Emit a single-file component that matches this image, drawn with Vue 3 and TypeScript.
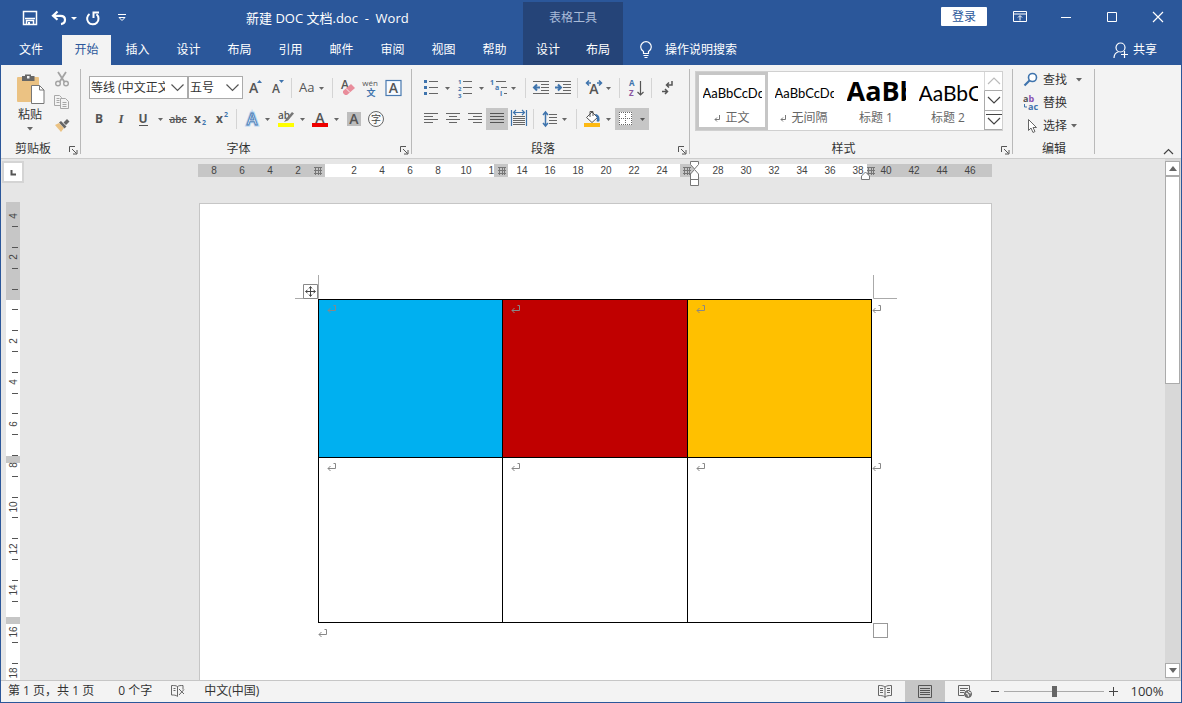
<script setup lang="ts">
import { ref } from 'vue'

const tabs: string[] = ['文件', '开始', '插入', '设计', '布局', '引用', '邮件', '审阅', '视图', '帮助']
const tableTabs: string[] = ['设计', '布局']
const activeTab = ref('开始')
const zoom = ref(50)

interface StylePreview {
  name: string
  sample: string
  kind: string
  mark: boolean
}
const styles: StylePreview[] = [
  { name: '正文', sample: 'AaBbCcDd', kind: 'body', mark: true },
  { name: '无间隔', sample: 'AaBbCcDd', kind: 'body', mark: true },
  { name: '标题 1', sample: 'AaBb', kind: 'h1', mark: false },
  { name: '标题 2', sample: 'AaBbC', kind: 'h2', mark: false },
]

const rulerNumbers: string[] = []
for (let n = -8; n <= 46; n += 2) {
  rulerNumbers.push(n === 0 || n === 26 ? '' : String(Math.abs(n)))
}

const rulerOrigin = 97
const rulerStep = 41.6
const verticalNumbers = [-4, -2, 2, 4, 6, 8, 10, 12, 14, 16, 18].map((n) => ({
  label: Math.abs(n),
  y: Math.round(rulerOrigin + (n / 2) * rulerStep),
}))
const verticalTicks: number[] = []
for (let k = -4; k < 18; k++) {
  const y = Math.round(rulerOrigin + 10.4 + k * 20.8)
  if (k !== 15) verticalTicks.push(y)
}

const cells = [
  ['blue', 'red', 'gold'],
  ['plain', 'plain', 'plain'],
]
</script>

<template>
  <div class="window">
    <header class="head">
      <div class="title-row">
        <div class="title-left">
          <div class="quick">
            <button class="qbtn save" aria-label="保存">
              <svg width="16" height="16" viewBox="0 0 16 16"><path d="M1.500 1.500h13v13h-13zM3 8.500h10M4.500 14v-3.500h7V14" fill="none" stroke="#fff" stroke-width="1.500" /><path d="M6 12h2v2H6z" fill="#fff" /></svg>
            </button>
            <button class="qbtn undo" aria-label="撤消">
              <svg width="26" height="16" viewBox="0 0 26 16"><path d="M6.500 1.500L2 5.800l4.500 4M2.500 5.800h7c3 0 4.500 1.700 4.500 4s-1.500 4-4 4.300" fill="none" stroke="#fff" stroke-width="2.200" /><path d="M20 7h6l-3 3z" fill="#fff" /></svg>
            </button>
            <button class="qbtn redo" aria-label="恢复">
              <svg width="16" height="16" viewBox="0 0 16 16"><path d="M4.500 4A5.700 5.700 0 1 0 11.500 4.300" fill="none" stroke="#fff" stroke-width="2" /><path d="M8.500 8V2.500H14" fill="none" stroke="#fff" stroke-width="2" /></svg>
            </button>
            <button class="qbtn more" aria-label="自定义快速访问工具栏">
              <svg width="10" height="8" viewBox="0 0 10 8"><path d="M1 .5h8M2 3.500h6l-3 3z" fill="none" stroke="#fff" /></svg>
            </button>
          </div>
          <h1 class="doc-title">新建 DOC 文档.doc&nbsp; - &nbsp;Word</h1>
        </div>
        <div class="context-title">表格工具</div>
        <div class="grow"></div>
        <button class="login">登录</button>
        <button class="wbtn" aria-label="功能区显示选项">
          <svg width="14" height="12" viewBox="0 0 14 12"><path d="M.5.500h13v10H.500zM.500 3h13M7 9.500V5M5 6.500l2-2 2 2" fill="none" stroke="#fff" /></svg>
        </button>
        <button class="wbtn" aria-label="最小化">
          <svg width="12" height="12" viewBox="0 0 12 12"><path d="M1 6.500h10" stroke="#fff" /></svg>
        </button>
        <button class="wbtn" aria-label="最大化">
          <svg width="12" height="12" viewBox="0 0 12 12"><path d="M1.500 1.500h9v9h-9z" fill="none" stroke="#fff" /></svg>
        </button>
        <button class="wbtn" aria-label="关闭">
          <svg width="12" height="12" viewBox="0 0 12 12"><path d="M1 1l10 10M11 1L1 11" stroke="#fff" stroke-width="1.200" /></svg>
        </button>
      </div>
      <nav class="tab-row">
        <button v-for="t in tabs" :key="t" class="tab" :class="{ file: t === '文件', active: t === activeTab }" @click="activeTab = t">{{ t }}</button>
        <div class="context-tabs">
          <button v-for="t in tableTabs" :key="t" class="tab">{{ t }}</button>
        </div>
        <label class="tell">
          <svg width="14" height="18" viewBox="0 0 14 18"><path d="M4.500 12.500v-2C2.800 9.400 1.700 7.900 1.700 6a5.300 5.300 0 0 1 10.600 0c0 1.900-1.100 3.400-2.800 4.500v2zM4.500 14.500h5M5.500 16.500h3" fill="none" stroke="#fff" stroke-width="1.200" /></svg>
          <input type="text" placeholder="操作说明搜索" aria-label="操作说明搜索" />
        </label>
        <div class="grow"></div>
        <button class="share">
          <svg width="16" height="17" viewBox="0 0 16 17"><circle cx="7.500" cy="5.500" r="4.500" fill="none" stroke="#fff" stroke-width="1.200" /><path d="M1 16c0-3.500 2-5.500 4.500-6.300M8 12.500h7M11.500 9v7" fill="none" stroke="#fff" stroke-width="1.200" /></svg>
          <span>共享</span>
        </button>
      </nav>
    </header>

    <section class="ribbon">
      <div class="group clipboard">
        <div class="clip-body">
          <button class="paste">
            <svg width="30" height="34" viewBox="0 0 30 34"><rect x="2" y="4" width="22" height="25" rx="1" fill="#ebc283" /><path d="M7 3h3V1.500h6V3h3.500v5H7z" fill="#666" /><path d="M12 3h2.500v2.500H12z" fill="#f3f3f3" /><path d="M16.500 12.500h8l4.500 4.500v13.500H16.500z" fill="#fff" stroke="#777" /><path d="M24.500 12.500V17H29" fill="none" stroke="#777" /></svg>
            <span>粘贴</span>
            <svg width="6" height="4" viewBox="0 0 6 4"><path d="M0 0h6L3 3.500z" fill="#666" /></svg>
          </button>
          <div class="clip-tools">
            <button aria-label="剪切">
              <svg width="16" height="16" viewBox="0 0 16 16"><path d="M4 1l6.500 10M12 1L5.500 11" stroke="#a3a3a3" stroke-width="1.800" fill="none" /><circle cx="4" cy="12.500" r="2.300" fill="none" stroke="#a3a3a3" stroke-width="1.400" /><circle cx="12" cy="12.500" r="2.300" fill="none" stroke="#a3a3a3" stroke-width="1.400" /></svg>
            </button>
            <button aria-label="复制">
              <svg width="16" height="16" viewBox="0 0 16 16"><path d="M6.500 11.500h-6v-10h5l2 2v1M2.500 4.500h3M2.500 6.500h3M2.500 8.500h3" fill="none" stroke="#a8a8a8" /><path d="M6.500 4.500h5l3 3v7h-8zM8.500 8.500h4M8.500 10.500h4M8.500 12.500h4" fill="none" stroke="#a8a8a8" /></svg>
            </button>
            <button aria-label="格式刷">
              <svg width="16" height="16" viewBox="0 0 16 16"><path d="M1 8l4-2 5 5-3 4z" fill="#ebc283" /><path d="M5 5.500l2-1.500 5.500 5.500-2 2zM9.500 5.500L13 2l2.500 2.500L12 8z" fill="#666" /></svg>
            </button>
          </div>
        </div>
        <div class="foot"><span>剪贴板</span><button class="launch" aria-label="剪贴板选项"><svg width="9" height="9" viewBox="0 0 9 9"><path d="M.5 6V.5H6M3 3l4.500 4.500M8 4v4H4" fill="none" stroke="#555" /></svg></button></div>
      </div>

      <div class="group font">
        <div class="rows">
          <div class="row">
            <span class="combo family">
              <select aria-label="字体"><option>等线 (中文正文)</option><option>宋体</option></select>
              <svg width="13" height="8" viewBox="0 0 13 8"><path d="M.5.500l6 6 6-6" fill="none" stroke="#555" stroke-width="1.200" /></svg>
            </span>
            <span class="combo size">
              <select aria-label="字号"><option>五号</option><option>小四</option></select>
              <svg width="13" height="8" viewBox="0 0 13 8"><path d="M.5.500l6 6 6-6" fill="none" stroke="#555" stroke-width="1.200" /></svg>
            </span>
            <button aria-label="增大字号"><svg width="22" height="22" viewBox="0 0 22 22"><text x="5" y="16" class="g" font-size="14">A</text><path d="M13 6l2.500-3L18 6z" fill="#3f74ad" /></svg></button>
            <button aria-label="减小字号"><svg width="22" height="22" viewBox="0 0 22 22"><text x="6" y="16" class="g" font-size="12">A</text><path d="M13 3h5l-2.500 3z" fill="#3f74ad" /></svg></button>
            <i class="sep"></i>
            <button aria-label="更改大小写"><svg width="34" height="22" viewBox="0 0 34 22"><text x="4" y="15" class="t" font-size="13">Aa</text><path d="M24 10h5l-2.500 3z" fill="#666" /></svg></button>
            <i class="sep"></i>
            <button aria-label="清除所有格式"><svg width="23" height="22" viewBox="0 0 23 22"><text x="5" y="12" class="g" font-size="12">A</text><path d="M7 14l8-7 4 4-8 7H9l-2-2z" fill="#e98d9b" /><path d="M10 11.500l4 4" stroke="#f3f3f3" /></svg></button>
            <button aria-label="拼音指南"><svg width="23" height="22" viewBox="0 0 23 22"><text x="11" y="9" class="t" font-size="8" text-anchor="middle">wén</text><text x="12" y="19" font-size="9" font-weight="700" fill="#3f74ad" text-anchor="middle">文</text></svg></button>
            <button aria-label="字符边框"><svg width="23" height="22" viewBox="0 0 23 22"><rect x="4" y="3.500" width="15" height="15" fill="#f8fbff" stroke="#4a7ab0" stroke-width="1.200" /><text x="11.500" y="16" class="g" font-size="14" text-anchor="middle">A</text></svg></button>
          </div>
          <div class="row">
            <button aria-label="加粗"><svg width="21" height="22" viewBox="0 0 21 22"><text x="10" y="15" class="b" text-anchor="middle">B</text></svg></button>
            <button aria-label="倾斜"><svg width="22" height="22" viewBox="0 0 22 22"><text x="11" y="15" class="i" text-anchor="middle">I</text></svg></button>
            <button aria-label="下划线"><svg width="34" height="22" viewBox="0 0 34 22"><text x="11" y="15" class="b" text-anchor="middle">U</text><path d="M7 17.500h9" stroke="#555" /><path d="M26 10h5l-2.500 3z" fill="#666" /></svg></button>
            <button aria-label="删除线"><svg width="24" height="22" viewBox="0 0 24 22"><text x="12" y="15" class="g" font-size="10" text-anchor="middle">abc</text><path d="M3 11.500h18" stroke="#555" /></svg></button>
            <button aria-label="下标"><svg width="21" height="22" viewBox="0 0 21 22"><text x="4" y="15" class="b">x</text><text x="12" y="17" font-size="7" font-weight="700" fill="#3f74ad">2</text></svg></button>
            <button aria-label="上标"><svg width="22" height="22" viewBox="0 0 22 22"><text x="5" y="15" class="b">x</text><text x="13" y="9" font-size="7" font-weight="700" fill="#3f74ad">2</text></svg></button>
            <i class="sep"></i>
            <button aria-label="文本效果"><svg width="34" height="22" viewBox="0 0 34 22"><text x="12" y="17" font-size="16" font-weight="600" fill="#f3f8fd" stroke="#b9d5f0" stroke-width="3" text-anchor="middle">A</text><text x="12" y="17" font-size="16" font-weight="600" fill="#fff" stroke="#4c7fb8" text-anchor="middle">A</text><path d="M25 10h5l-2.500 3z" fill="#666" /></svg></button>
            <button aria-label="突出显示"><svg width="34" height="22" viewBox="0 0 34 22"><text x="4" y="11" class="g" font-size="10">ab</text><path d="M10 14l2-3 6-7 2 1.500-6 7z" fill="#777" /><path d="M4 15h16v4H4z" fill="#ff0" /><path d="M26 10h5l-2.500 3z" fill="#666" /></svg></button>
            <button aria-label="字体颜色"><svg width="34" height="22" viewBox="0 0 34 22"><text x="12" y="15" class="g" font-size="14" text-anchor="middle">A</text><path d="M4 15h16v4H4z" fill="#e00" /><path d="M26 10h5l-2.500 3z" fill="#666" /></svg></button>
            <button aria-label="字符底纹"><svg width="22" height="22" viewBox="0 0 22 22"><path d="M5 4h14v14H5z" fill="#bdbdbd" /><text x="12" y="16" class="g" font-size="14" text-anchor="middle">A</text></svg></button>
            <button aria-label="带圈字符"><svg width="22" height="22" viewBox="0 0 22 22"><circle cx="12" cy="11" r="7.500" fill="#fafafa" stroke="#666" /><text x="12" y="15" font-size="10" fill="#444" text-anchor="middle">字</text></svg></button>
          </div>
        </div>
        <div class="foot"><span>字体</span><button class="launch" aria-label="字体选项"><svg width="9" height="9" viewBox="0 0 9 9"><path d="M.5 6V.5H6M3 3l4.500 4.500M8 4v4H4" fill="none" stroke="#555" /></svg></button></div>
      </div>

      <div class="group para">
        <div class="rows">
          <div class="row">
            <button aria-label="项目符号"><svg width="34" height="22" viewBox="0 0 34 22"><path d="M4 3h3v3H4zM4 9h3v3H4zM4 15h3v3H4z" fill="#3f74ad" /><path d="M9 4.500h9M9 10.500h9M9 16.500h9" stroke="#666" /><path d="M25 10h5l-2.500 3z" fill="#666" /></svg></button>
            <button aria-label="编号"><svg width="34" height="22" viewBox="0 0 34 22"><g font-size="6" font-weight="700" fill="#3f74ad"><text x="4" y="7">1</text><text x="4" y="14">2</text><text x="4" y="21">3</text></g><path d="M9 4.500h9M9 10.500h9M9 16.500h9" stroke="#666" /><path d="M25 10h5l-2.500 3z" fill="#666" /></svg></button>
            <button aria-label="多级列表"><svg width="34" height="22" viewBox="0 0 34 22"><g font-size="7" font-weight="700" fill="#3f74ad"><text x="2" y="8">1</text><text x="7" y="13">a</text><text x="12" y="19">i</text></g><path d="M8 4.500h10M13 10.500h6M16 16.500h3" stroke="#666" /><path d="M23 10h5l-2.500 3z" fill="#666" /></svg></button>
            <i class="sep"></i>
            <button aria-label="减少缩进量"><svg width="23" height="22" viewBox="0 0 23 22"><path d="M4 4.500h16M12 7.500h8M12 10.500h8M12 13.500h8M4 16.500h16" stroke="#666" /><path d="M11 10.500H6M8 7.500l-3 3 3 3" fill="none" stroke="#3f74ad" stroke-width="2" /></svg></button>
            <button aria-label="增加缩进量"><svg width="22" height="22" viewBox="0 0 22 22"><path d="M3 4.500h16M11 7.500h8M11 10.500h8M11 13.500h8M3 16.500h16" stroke="#666" /><path d="M3 10.500h5M6 7.500l3 3-3 3" fill="none" stroke="#3f74ad" stroke-width="2" /></svg></button>
            <i class="sep"></i>
            <button aria-label="中文版式"><svg width="35" height="22" viewBox="0 0 35 22"><text x="13" y="17" class="g" font-size="14" text-anchor="middle">A</text><path d="M10 6H6M8 3.500L5.500 6 8 8.500M16 6h4M18 3.500L20.500 6 18 8.500" fill="none" stroke="#3f74ad" stroke-width="1.500" /><path d="M25 10h5l-2.500 3z" fill="#666" /></svg></button>
            <i class="sep"></i>
            <button aria-label="排序"><svg width="25" height="22" viewBox="0 0 25 22"><text x="6" y="9" font-size="8" font-weight="700" fill="#3f74ad">A</text><text x="6" y="19" font-size="8" font-weight="700" fill="#8a55a0">Z</text><path d="M17.500 4v14M14.500 15l3 3 3-3" fill="none" stroke="#555" stroke-width="1.200" /></svg></button>
            <i class="sep"></i>
            <button aria-label="显示编辑标记"><svg width="24" height="22" viewBox="0 0 24 22"><path d="M17 4v4h-5M14 5.500L11.500 8l2.500 2.500M7 14.500h5M10 12l2.500 2.500L10 17" fill="none" stroke="#555" stroke-width="1.500" /></svg></button>
          </div>
          <div class="row">
            <button aria-label="左对齐"><svg width="22" height="22" viewBox="0 0 22 22"><path d="M4 5.500h14M4 8.500h9M4 11.500h14M4 14.500h9" stroke="#666" /></svg></button>
            <button aria-label="居中"><svg width="22" height="22" viewBox="0 0 22 22"><path d="M4 5.500h14M7 8.500h8M4 11.500h14M7 14.500h8" stroke="#666" /></svg></button>
            <button aria-label="右对齐"><svg width="22" height="22" viewBox="0 0 22 22"><path d="M4 5.500h14M9 8.500h9M4 11.500h14M9 14.500h9" stroke="#666" /></svg></button>
            <button class="on" aria-label="两端对齐"><svg width="22" height="22" viewBox="0 0 22 22"><path d="M4 5.500h14M4 8.500h14M4 11.500h14M4 14.500h14" stroke="#555" /></svg></button>
            <button aria-label="分散对齐"><svg width="22" height="22" viewBox="0 0 22 22"><path d="M3.500 2v16M18.500 2v16M6 4.500h10M8 2L5.500 4.500 8 7M14 2l2.500 2.500L14 7" fill="none" stroke="#3f74ad" stroke-width="1.200" /><path d="M5 8.500h12M5 10.500h12M5 12.500h12M5 14.500h12M5 16.500h12" stroke="#666" /></svg></button>
            <i class="sep"></i>
            <button aria-label="行距"><svg width="36" height="22" viewBox="0 0 36 22"><path d="M8.500 4v14M6 7l2.500-3L11 7M6 15l2.500 3 2.500-3" fill="none" stroke="#3f74ad" stroke-width="1.500" /><path d="M12 6.500h8M12 9.500h8M12 12.500h8M12 15.500h8" stroke="#666" /><path d="M25 10h5l-2.500 3z" fill="#666" /></svg></button>
            <i class="sep"></i>
            <button aria-label="底纹"><svg width="35" height="22" viewBox="0 0 35 22"><path d="M6.500 9.500L12 4l5.500 5.500L12 14.500z" fill="#fff" stroke="#555" /><path d="M10 9V3.500h3V8" fill="none" stroke="#555" /><path d="M15 6c3 0 5 2 4.500 7-1 1-2 1-3 0 1-2 .5-4-1.500-7z" fill="#3f74ad" /><path d="M4 15h16v4H4z" fill="#fdb913" /><path d="M26 10h5l-2.500 3z" fill="#666" /></svg></button>
            <button class="on" aria-label="边框"><svg width="34" height="22" viewBox="0 0 34 22"><path d="M4 4h13v13H4z" fill="#fff" /><path d="M4.500 4v13M10.500 4v13M16.500 4v13M4 4.500h13M4 10.500h13M4 16.500h13" stroke="#666" stroke-dasharray="1 1" /><path d="M25 10h5l-2.500 3z" fill="#555" /></svg></button>
          </div>
        </div>
        <div class="foot"><span>段落</span><button class="launch" aria-label="段落选项"><svg width="9" height="9" viewBox="0 0 9 9"><path d="M.5 6V.5H6M3 3l4.500 4.500M8 4v4H4" fill="none" stroke="#555" /></svg></button></div>
      </div>

      <div class="group styles">
        <div class="gallery">
          <button v-for="(s, n) in styles" :key="s.name" class="style" :class="{ picked: n === 0 }">
            <span class="sample" :class="s.kind">{{ s.sample }}</span>
            <span class="caption">
              <svg v-if="s.mark" width="7" height="7" viewBox="0 0 7 7"><path d="M5.500 0v4.500H1M3 2.500l-2 2 2 2" fill="none" stroke="#777" /></svg>
              {{ s.name }}
            </span>
          </button>
          <div class="pager">
            <button class="dim" aria-label="上一行"><svg width="14" height="8" viewBox="0 0 14 8"><path d="M1 7l6-6 6 6" fill="none" stroke="#bbb" stroke-width="1.200" /></svg></button>
            <button aria-label="下一行"><svg width="14" height="8" viewBox="0 0 14 8"><path d="M1 1l6 6 6-6" fill="none" stroke="#444" stroke-width="1.200" /></svg></button>
            <button aria-label="其他"><svg width="16" height="13" viewBox="0 0 16 13"><path d="M0 1.500h16M2 5l6 6 6-6" fill="none" stroke="#444" stroke-width="1.200" /></svg></button>
          </div>
        </div>
        <div class="foot"><span>样式</span><button class="launch" aria-label="样式选项"><svg width="9" height="9" viewBox="0 0 9 9"><path d="M.5 6V.5H6M3 3l4.500 4.500M8 4v4H4" fill="none" stroke="#555" /></svg></button></div>
      </div>

      <div class="group edit">
        <div class="edit-body">
          <button>
            <svg width="16" height="16" viewBox="0 0 16 16"><circle cx="9.500" cy="5.500" r="4" fill="#fff" stroke="#3f74ad" stroke-width="1.600" /><path d="M6.500 8.500L1.500 13.500" stroke="#3f74ad" stroke-width="2.200" /></svg>
            <span>查找</span>
            <svg class="wide" width="6" height="4" viewBox="0 0 6 4"><path d="M0 0h6L3 3.500z" fill="#666" /></svg>
          </button>
          <button>
            <svg width="16" height="16" viewBox="0 0 16 16"><text x="0" y="7" font-size="9" font-weight="700" fill="#555">a<tspan fill="#8a4fb0">b</tspan></text><text x="5" y="15" font-size="9" font-weight="700" fill="#3f74ad">ac</text><path d="M1.500 9v3H4" fill="none" stroke="#3f74ad" /></svg>
            <span>替换</span>
          </button>
          <button>
            <svg width="16" height="16" viewBox="0 0 16 16"><path d="M5.500 1.500v11l2.500-2.500 2 4.500 2-1-2-4h3.500z" fill="#fff" stroke="#666" /></svg>
            <span>选择</span>
            <svg width="6" height="4" viewBox="0 0 6 4"><path d="M0 0h6L3 3.500z" fill="#666" /></svg>
          </button>
        </div>
        <div class="foot"><span>编辑</span></div>
      </div>
      <div class="grow"></div>
      <button class="collapse" aria-label="折叠功能区"><svg width="11" height="7" viewBox="0 0 11 7"><path d="M1 6l4.500-4.500L10 6" fill="none" stroke="#444" stroke-width="1.200" /></svg></button>
    </section>

    <main class="work">
      <aside class="side">
        <button class="corner" aria-label="制表符"><svg width="7" height="7" viewBox="0 0 7 7"><path d="M1.500 1v4.500H6" fill="none" stroke="#555" stroke-width="2" /></svg></button>
        <svg class="vruler" width="14" height="480" viewBox="0 0 14 480">
          <path d="M0 0h14v480H0z" fill="#fff" />
          <path d="M0 0h14v98H0zM0 254h14v7H0zM0 415h14v7H0z" fill="#c6c6c6" />
          <path v-for="y in verticalTicks" :key="y" :d="`M6 ${y}.5h6`" stroke="#555" />
          <text v-for="v in verticalNumbers" :key="v.y" x="0" y="0" :transform="`translate(11 ${v.y}) rotate(-90)`" text-anchor="middle">{{ v.label }}</text>
        </svg>
      </aside>

      <div class="canvas">
        <div class="hruler">
          <span v-for="(n, i) in rulerNumbers" :key="i">{{ n }}</span>
          <svg class="markers" width="794" height="26" viewBox="0 0 794 26">
            <path d="M296 3h14v13h-14z" fill="#c6c6c6" />
            <path d="M116 6.500h8M116 9.500h8M116 12.500h8M117.500 6v8M120.500 6v8M122.500 6v8M300 6.500h8M300 9.500h8M300 12.500h8M301.500 6v8M304.500 6v8M306.500 6v8M485 6.500h8M485 9.500h8M485 12.500h8M486.500 6v8M489.500 6v8M491.500 6v8M669 6.500h8M669 9.500h8M669 12.500h8M670.500 6v8M673.500 6v8M675.500 6v8" stroke="#777" />
            <path d="M492.500.500h8v3l-4 4.500-4-4.500zM492.500 18.500v-5.500l4-4.500 4 4.500v5.500zM492.500 18.500h8v6h-8zM663.500 18.500V15l4-4 4 4v3.500z" fill="#fff" stroke="#777" />
          </svg>
        </div>
        <article class="page">
          <svg class="crop left" width="24" height="24" viewBox="0 0 24 24"><path d="M0 23.500h23.500V0" fill="none" stroke="#aaa" /></svg>
          <svg class="crop right" width="24" height="24" viewBox="0 0 24 24"><path d="M24 23.500H.5V0" fill="none" stroke="#aaa" /></svg>
          <svg class="handle" width="15" height="15" viewBox="0 0 15 15"><path d="M.5.500h14v14H.500z" fill="#fff" stroke="#888" /><path d="M7.500 3v9M3 7.500h9M6 4.500L7.500 2.500 9 4.500M6 10.500l1.500 2 1.500-2M4.500 6l-2 1.500 2 1.500M10.500 6l2 1.500-2 1.500" fill="none" stroke="#444" /></svg>
          <table>
            <tbody>
              <tr v-for="(row, r) in cells" :key="r">
                <td v-for="(c, i) in row" :key="i" :class="c">
                  <svg class="ret" width="10" height="9" viewBox="0 0 10 9"><path d="M6.500.5h2v5H1M3.500 3L1 5.500 3.500 8" fill="none" stroke="#888" /></svg>
                </td>
                <td class="end">
                  <svg class="ret" width="10" height="9" viewBox="0 0 10 9"><path d="M6.500.5h2v5H1M3.500 3L1 5.500 3.500 8" fill="none" stroke="#888" /></svg>
                </td>
              </tr>
            </tbody>
          </table>
          <p class="tail"><svg class="ret" width="10" height="9" viewBox="0 0 10 9"><path d="M6.500.5h2v5H1M3.500 3L1 5.500 3.500 8" fill="none" stroke="#888" /></svg></p>
          <i class="resize"></i>
        </article>
      </div>

      <div class="scroll">
        <button aria-label="向上滚动"><svg width="8" height="5" viewBox="0 0 8 5"><path d="M0 5h8L4 0z" fill="#666" /></svg></button>
        <div class="thumb"></div>
        <div class="grow"></div>
        <button aria-label="向下滚动"><svg width="8" height="5" viewBox="0 0 8 5"><path d="M0 0h8L4 5z" fill="#666" /></svg></button>
      </div>
    </main>

    <footer class="status">
      <span class="pages">第 1 页，共 1 页</span>
      <span class="words">0 个字</span>
      <button class="proof" aria-label="校对"><svg width="16" height="14" viewBox="0 0 16 14"><path d="M7.500 2.500C6 1.500 4 1.500 1.500 1.500v9.500c2.500 0 4.500 0 6 1.500V2.500c1.500-1 3-1 5.500-1v4M3.500 4.500h2M3.500 6.500h2M9 5l5 5M14 5.500L9 11" fill="none" stroke="#666" /></svg></button>
      <span>中文(中国)</span>
      <div class="grow"></div>
      <button class="view" aria-label="阅读视图"><svg width="14" height="13" viewBox="0 0 14 13"><path d="M7 2C5 .5 3 .5.500.500v10c2.500 0 4.500 0 6.500 1.500 2-1.500 4-1.500 6.500-1.500V.500C11 .5 9 .5 7 2zM7 2v11M2 3.500h3M2 5.500h3M2 7.500h3M9 3.500h3M9 5.500h3M9 7.500h3" fill="none" stroke="#666" /></svg></button>
      <button class="view on" aria-label="页面视图"><svg width="14" height="13" viewBox="0 0 14 13"><path d="M.5.500h13v12H.500zM2 3.500h10M2 5.500h10M2 7.500h10M2 9.500h10" fill="none" stroke="#555" /></svg></button>
      <button class="view" aria-label="Web 版式视图"><svg width="14" height="13" viewBox="0 0 14 13"><path d="M11.500 5V.500H.500v10H6M2 3.500h8M2 5.500h5M2 7.500h4" fill="none" stroke="#666" /><circle cx="10" cy="9" r="3.500" fill="#777" stroke="#666" /><path d="M8 8l2 1 .5 2.500M10.500 6l.5 1.500 2 .5" stroke="#fff" fill="none" /></svg></button>
      <button class="step" aria-label="缩小"><svg width="9" height="9" viewBox="0 0 9 9"><path d="M1 4.500h8" stroke="#444" /></svg></button>
      <input v-model="zoom" class="zoom" type="range" min="0" max="100" aria-label="显示比例" />
      <button class="step" aria-label="放大"><svg width="9" height="9" viewBox="0 0 9 9"><path d="M0 4.500h9M4.500 0v9" stroke="#444" /></svg></button>
      <button class="percent">100%</button>
    </footer>
  </div>
</template>

<style>
body {
  margin: 0;
  overflow: hidden;
}
</style>

<style scoped>
.window {
  box-sizing: border-box;
  height: 100vh;
  display: flex;
  flex-direction: column;
  border: 1px solid #2b579a;
  border-top: 0;
  background: #e6e6e6;
  font: 12px/16px "Open Sans", "Noto Sans CJK SC", sans-serif;
  color: #333;
}
.window *,
.window *::before {
  box-sizing: border-box;
}
button {
  border: 0;
  padding: 0;
  margin: 0;
  background: none;
  font: inherit;
  color: inherit;
  display: flex;
  align-items: center;
  justify-content: center;
  flex: none;
  white-space: nowrap;
}
svg {
  display: block;
  flex: none;
  font-family: "Open Sans", "Noto Sans CJK SC", sans-serif;
}
.grow {
  flex: 1;
}
.head {
  flex: none;
  background: #2b579a;
  color: #fff;
}
.title-row {
  display: flex;
  height: 35px;
}
.title-left {
  width: 522px;
  display: flex;
  align-items: center;
}
.quick {
  display: flex;
  align-items: center;
  width: 245px;
  padding-left: 21px;
}
.undo {
  margin-left: 13px;
}
.redo {
  margin-left: 8px;
}
.more {
  margin-left: 16px;
}
.doc-title {
  margin: 0;
  font-size: 13px;
  font-weight: 400;
  white-space: nowrap;
}
.context-title {
  width: 100px;
  margin-top: 2px;
  line-height: 32px;
  text-align: center;
  background: #254478;
  color: #a9bbd8;
}
.login {
  width: 46px;
  height: 19px;
  margin: 7px 10px 0 0;
  background: #fff;
  color: #2b579a;
  border-radius: 1px;
}
.wbtn {
  width: 46px;
  height: 33px;
}
.tab-row {
  display: flex;
  height: 30px;
}
.tab {
  width: 51px;
  height: 30px;
}
.tab.file {
  width: 60px;
}
.tab.active {
  width: 49px;
  margin: 0 1px;
  background: #f3f3f3;
  color: #2b579a;
}
.context-tabs {
  display: flex;
  margin-left: 3px;
  background: #254478;
}
.context-tabs .tab {
  width: 50px;
}
.tell {
  display: flex;
  align-items: center;
  margin-left: 16px;
  gap: 12px;
}
.tell input {
  width: 120px;
  padding: 0;
  border: 0;
  background: none;
  font: inherit;
  color: #fff;
}
.tell input::placeholder {
  color: #fff;
  opacity: 1;
}
.share {
  gap: 4px;
  margin-right: 24px;
}
.ribbon {
  flex: none;
  display: flex;
  height: 94px;
  background: #f3f3f3;
  border-bottom: 1px solid #cdcdcd;
  position: relative;
}
.group {
  flex: none;
  display: flex;
  flex-direction: column;
  justify-content: space-between;
  position: relative;
}
.group::before {
  content: "";
  position: absolute;
  right: 0;
  top: 4px;
  bottom: 4px;
  width: 1px;
  background: #b9b9b9;
}
.foot {
  display: flex;
  align-items: center;
  height: 18px;
}
.foot span {
  flex: 1;
  text-align: center;
}
.launch {
  width: 16px;
  height: 18px;
  padding-top: 2px;
}
.clipboard {
  width: 80px;
}
.clip-body {
  display: flex;
  padding: 5px 0 0 14px;
}
.paste {
  flex-direction: column;
  width: 30px;
}
.paste span {
  margin: 0 0 4px;
}
.clip-tools {
  display: flex;
  flex-direction: column;
  gap: 7px;
  padding: 1px 0 0 9px;
}
.font {
  width: 331px;
}
.para {
  width: 278px;
}
.styles {
  width: 323px;
}
.edit {
  width: 82px;
}
.rows {
  padding: 11px 0 0 8px;
  display: flex;
  flex-direction: column;
  gap: 8px;
}
.row {
  display: flex;
  align-items: center;
  height: 23px;
}
.row .on {
  background: #c6c6c6;
}
.sep {
  width: 1px;
  height: 20px;
  margin: 0 3px;
  background: #d4d4d4;
}
.combo {
  position: relative;
  display: block;
}
.combo select {
  appearance: none;
  display: block;
  width: 100%;
  height: 23px;
  padding: 0 22px 0 1px;
  border: 1px solid #ababab;
  border-radius: 0;
  background: #fff;
  font: inherit;
  color: #333;
  overflow: hidden;
}
.combo svg {
  position: absolute;
  right: 4px;
  top: 8px;
  pointer-events: none;
}
.family {
  width: 99px;
}
.size {
  width: 55px;
  margin-right: 1px;
}
.g {
  fill: #555;
  font-weight: 600;
}
.t {
  fill: #555;
}
.b {
  fill: #555;
  font-size: 12px;
  font-weight: 700;
}
.i {
  fill: #555;
  font: italic 700 13px "Liberation Serif", serif;
}
.gallery {
  display: flex;
  margin: 6px 10px 0 5px;
  border: 1px solid #d0d0d0;
  background: #fff;
  height: 60px;
}
.style {
  width: 72px;
  flex-direction: column;
  justify-content: flex-start;
  border: 3px solid #fff;
  padding: 0 3px;
}
.style.picked {
  border-color: #c6c6c6;
}
.sample {
  width: 59px;
  height: 35px;
  line-height: 36px;
  overflow: hidden;
  text-align: left;
  color: #000;
  font-family: Lato, sans-serif;
}
.sample.body {
  font-size: 13px;
}
.sample.h1 {
  font: 700 27px/31px "Open Sans", sans-serif;
}
.sample.h2 {
  font-size: 21px;
}
.caption {
  display: flex;
  align-items: center;
  gap: 4px;
  color: #666;
}
.pager {
  flex: 1;
  display: flex;
  flex-direction: column;
}
.pager button {
  flex: 1;
  border: 1px solid #ababab;
  border-width: 0 0 1px 1px;
}
.pager .dim {
  border-color: #d8d8d8 #d8d8d8 #ababab;
}
.edit-body {
  display: flex;
  flex-direction: column;
  align-items: flex-start;
  gap: 7px;
  padding: 7px 0 0 10px;
}
.edit-body button {
  height: 16px;
  gap: 4px;
}
.edit-body .wide {
  margin-left: 5px;
}
.collapse {
  align-self: flex-end;
  width: 26px;
  height: 14px;
}
.work {
  flex: 1;
  min-height: 0;
  display: flex;
  overflow: hidden;
}
.side {
  flex: none;
  width: 24px;
}
.corner {
  width: 22px;
  height: 22px;
  margin: 2px 0 19px 1px;
  border: 2px solid #d4d4d4;
  background: #fff;
}
.vruler {
  margin-left: 5px;
}
.vruler text {
  font: 10px "Liberation Sans", sans-serif;
  fill: #444;
}
.canvas {
  flex: 1;
  display: flex;
  flex-direction: column;
  align-items: center;
  padding-top: 5px;
}
.hruler {
  flex: none;
  position: relative;
  display: flex;
  width: 794px;
  height: 13px;
  padding-left: 2px;
  background: linear-gradient(90deg, #c6c6c6 127px, #fff 127px, #fff 482px, #c6c6c6 482px, #c6c6c6 496px, #fff 496px, #fff 669px, #c6c6c6 669px);
}
.hruler span {
  width: 28px;
  font: 10px/13px "Liberation Sans", sans-serif;
  text-align: center;
  color: #444;
}
.markers {
  position: absolute;
  left: 0;
  top: -3px;
}
.page {
  flex: none;
  position: relative;
  width: 793px;
  height: 1123px;
  margin: 26px 0 0 1px;
  padding: 95px 0 0 118px;
  background: #fff;
  border: 1px solid #c6c6c6;
}
.crop {
  position: absolute;
  top: 71px;
}
.crop.left {
  left: 95px;
}
.crop.right {
  left: 673px;
}
.handle {
  position: absolute;
  left: 103px;
  top: 80px;
}
table {
  border-collapse: collapse;
  table-layout: fixed;
  width: 579px;
}
td {
  height: 158px;
  padding: 5px 8px;
  border: 1px solid #000;
  vertical-align: top;
}
tr + tr td {
  height: 165px;
}
td.end {
  width: 25px;
  border: 0;
  padding: 5px 0;
}
.blue {
  background: #00b0f0;
}
.red {
  background: #c00000;
}
.gold {
  background: #ffc000;
}
.tail {
  margin: 6px 0 0;
}
.resize {
  position: absolute;
  left: 673px;
  top: 419px;
  width: 15px;
  height: 15px;
  border: 1px solid #999;
  background: #fff;
}
.scroll {
  flex: none;
  width: 16px;
  display: flex;
  flex-direction: column;
  padding: 2px 1px 2px 0;
  background: #d8d8d8;
}
.scroll button {
  height: 15px;
  background: #fff;
  border: 1px solid #ababab;
}
.thumb {
  height: 208px;
  background: #fff;
  border: 1px solid #ababab;
}
.status {
  flex: none;
  display: flex;
  align-items: center;
  height: 22px;
  background: #f3f3f3;
  border-top: 1px solid #c6c6c6;
  padding: 0 0 1px 7px;
}
.words {
  margin-left: 24px;
}
.proof {
  margin: 0 18px;
}
.view {
  width: 40px;
  height: 21px;
}
.view.on {
  background: #c6c6c6;
}
.step {
  width: 19px;
  height: 21px;
}
.zoom {
  appearance: none;
  width: 100px;
  height: 12px;
  margin: 0;
  background: linear-gradient(#aaa, #aaa) center / 100% 1px no-repeat;
}
.zoom::-webkit-slider-thumb {
  appearance: none;
  width: 5px;
  height: 11px;
  background: #666;
}
.percent {
  width: 58px;
  padding-right: 10px;
  font-size: 13px;
}
</style>
